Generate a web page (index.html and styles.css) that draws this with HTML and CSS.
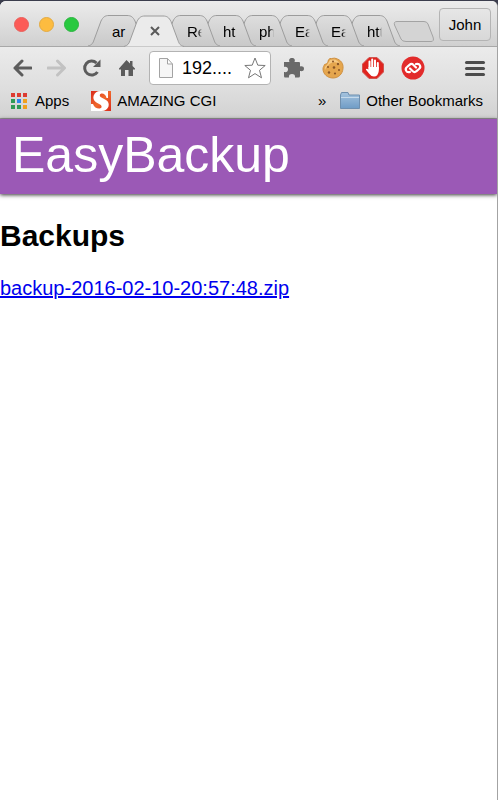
FILE: index.html
```html
<!DOCTYPE html>
<html lang="en">
<head>
    <meta charset="UTF-8">
    <meta name="viewport" content="width=device-width, initial-scale=1.0">
    <title>EasyBackup</title>
    <link rel="stylesheet" href="styles.css">
</head>
<body>
    <!-- tab outline shared by every tab -->
    <svg width="0" height="0" class="defs">
        <defs>
            <linearGradient id="tab-fill" x1="0" y1="0" x2="0" y2="1">
                <stop offset="0" stop-color="#dedede"/>
                <stop offset="1" stop-color="#c9c9c9"/>
            </linearGradient>
            <linearGradient id="folder-fill" x1="0" y1="0" x2="0" y2="1">
                <stop offset="0" stop-color="#a5c3de"/>
                <stop offset="1" stop-color="#6f9cc6"/>
            </linearGradient>
            <linearGradient id="s-fill" x1="0" y1="0" x2="1" y2="1">
                <stop offset="0" stop-color="#d92a1c"/>
                <stop offset=".5" stop-color="#f0682c"/>
                <stop offset="1" stop-color="#d92a1c"/>
            </linearGradient>
            <symbol id="tab-shape" viewBox="0 0 60 31">
                <path d="M0 31C4 30 5 28 6 25L13 6C15 2 17 .5 21 .5H39C43 .5 45 2 47 6L54 25C55 28 56 30 60 31"/>
            </symbol>
        </defs>
    </svg>

    <div class="window">
        <div class="tab-strip">
            <div class="lights">
                <button class="light red" aria-label="Close"></button>
                <button class="light yellow" aria-label="Minimize"></button>
                <button class="light green" aria-label="Zoom"></button>
            </div>
            <div class="tabs">
                <button class="tab first"><svg><use href="#tab-shape"/></svg><span>ar</span></button>
                <button class="tab active" aria-label="Close tab">
                    <svg><use href="#tab-shape"/></svg>
                    <svg class="close" viewBox="0 0 10 10"><path d="M1 1l8 8M9 1l-8 8"/></svg>
                </button>
                <button class="tab t3"><svg><use href="#tab-shape"/></svg><span>Re</span></button>
                <button class="tab t4"><svg><use href="#tab-shape"/></svg><span>ht</span></button>
                <button class="tab t5"><svg><use href="#tab-shape"/></svg><span>ph</span></button>
                <button class="tab t6"><svg><use href="#tab-shape"/></svg><span>Ea</span></button>
                <button class="tab t7"><svg><use href="#tab-shape"/></svg><span>Ea</span></button>
                <button class="tab t8"><svg><use href="#tab-shape"/></svg><span>htt</span></button>
            </div>
            <button class="new-tab" aria-label="New tab">
                <svg viewBox="0 0 42 21"><path d="M4 .5H31Q34 .5 35 3L40 16Q41.500 20.500 38 20.500H13Q9 20.500 8 18L1.500 4Q.5 .5 4 .5Z"/></svg>
            </button>
            <button class="user">John</button>
        </div>

        <div class="toolbar">
            <div class="nav">
                <button aria-label="Back"><svg class="nav-icon" viewBox="0 0 20 20"><path d="M19 10H3M10 3L3 10L10 17"/></svg></button>
                <button aria-label="Forward" class="disabled"><svg class="nav-icon" viewBox="0 0 20 20"><path d="M1 10H17M10.500 3L17.500 10L10.500 17"/></svg></button>
                <button aria-label="Reload"><svg class="nav-icon reload" viewBox="0 0 20 20"><path d="M15.500 14A7 7 0 1 1 14.500 5"/><path class="solid" d="M18.500 1.500V9H11Z"/></svg></button>
                <button aria-label="Home"><svg viewBox="0 0 20 20"><path fill="#5c5c5c" d="M2 10.500L9.500 2L13 5.500V3H15.500V8L18 10.500V11.500H16V18H11.500V12H8V18H4V11.500H2Z"/></svg></button>
            </div>
            <div class="omnibox">
                <svg class="page-icon" viewBox="0 0 14 20"><path d="M.5 .5H8.500L13.500 6V19.500H.5ZM8.500 .5V6H13.500"/></svg>
                <input type="text" value="192...." aria-label="Address">
                <button aria-label="Bookmark this page"><svg class="star" viewBox="0 0 22 22"><path d="M11 1L13.800 8.200L21.200 8.500L15.500 13.300L17.500 20.800L11 16.600L4.500 20.800L6.500 13.300L.8 8.500L8.200 8.200Z"/></svg></button>
            </div>
            <div class="extensions">
                <button aria-label="Extension">
                    <svg viewBox="0 0 24 24"><path fill="#696969" d="M3 6H8.500C7.500 4 8.500 2 11 2S14.500 4 13.500 6H18Q19 6 19 7V10.500C21 10 23 10.500 23 12.700S21 15.500 19 15V20Q19 21.500 17.500 21.500H14C14.500 19 13 18 11 18S7.500 19 8 21.500H4Q3 21.500 3 20V16C5.500 16.500 7 15.500 7 13.500S5.500 10.500 3 11Z"/></svg>
                </button>
                <button aria-label="Cookies">
                    <svg viewBox="0 0 24 24">
                        <path fill="#e5a64e" stroke="#cf9040" d="M9 2.500C11 3 13 1.500 15 2.500C20 4 22.500 7.500 22 12.500C21.500 18 17.500 22 12 22S2 18 2 13C2 11 3 10 3.500 8.500C5 8 7 7.500 7 5.500Q7 3.500 9 2.500Z"/>
                        <path fill="#f6c983" d="M9 4Q16 2 19 8Q15 5 10 7Q6 9 4 14Q3 11 6 9Z"/>
                        <g fill="#8a5526"><circle cx="12" cy="5.500" r="1"/><circle cx="17" cy="8" r="1.200"/><circle cx="7" cy="11" r="1"/><circle cx="13" cy="11.500" r="1.300"/><circle cx="18" cy="14" r="1"/><circle cx="8" cy="16.500" r="1.200"/><circle cx="14" cy="17.500" r="1.100"/></g>
                    </svg>
                </button>
                <button aria-label="Ad blocker">
                    <svg viewBox="0 0 24 24">
                        <path fill="#e0241f" stroke="#d05550" d="M8 1.500H16L22.500 8V16L16 22.500H8L1.500 16V8Z"/>
                        <path fill="none" stroke="#fff" stroke-width="2" stroke-linecap="round" d="M8.500 12V5.500M11.200 12V3.500M14 12V4.500M16.800 13V7"/>
                        <path fill="#fff" d="M7.500 11H17.800V15Q17 20.500 13 20.500Q10 20.500 8 17.500L4.800 13.500Q5.500 12 7.500 13.500Z"/>
                    </svg>
                </button>
                <button aria-label="Authy">
                    <svg viewBox="0 0 24 24">
                        <circle cx="12" cy="12" r="11.500" fill="#e22b2b"/>
                        <g fill="none" stroke="#fff" stroke-width="2.200" stroke-linecap="round">
                            <path d="M9 16C5 17 3.500 13 6 11L8.500 8.800C10 7.500 11.500 8 12.500 9L15 11.500"/>
                            <path d="M15 8C19 7 20.500 11 18 13L15.500 15.200C14 16.500 12.500 16 11.500 15L9 12.500"/>
                        </g>
                    </svg>
                </button>
            </div>
            <button class="menu" aria-label="Menu"><i></i><i></i><i></i></button>
        </div>

        <div class="bookmarks">
            <a href="#" class="apps">
                <svg viewBox="0 0 16 16">
                    <path fill="#dc3c32" d="M0 0h4v4H0zM6 0h4v4H6zM12 0h4v4h-4z"/>
                    <path fill="#2f9a55" d="M0 6h4v4H0zM0 12h4v4H0zM6 12h4v4H6z"/>
                    <path fill="#2b86ec" d="M6 6h4v4H6z"/>
                    <path fill="#f0a01e" d="M12 6h4v4h-4zM12 12h4v4h-4z"/>
                </svg>
                Apps
            </a>
            <a href="#" class="site">
                <svg viewBox="0 0 20 20">
                    <path fill="url(#s-fill)" d="M0 0H20V20H0Z"/>
                    <path fill="#fff" d="M17 0V7H15.500C15 4 13 2.500 11 2.500C8.500 2.500 8 5 10 6.200L15 9C20 12 18 20 10.500 20H0V13H2C3 16 5.500 17.500 8 17.500C11 17.500 11.500 15 9 13.500L5 11.200C0 8 2.500 0 9.500 0Z"/>
                </svg>
                AMAZING CGI
            </a>
            <button class="more" aria-label="More bookmarks">»</button>
            <a href="#" class="other">
                <svg viewBox="0 0 20 18"><path fill="url(#folder-fill)" stroke="#6f8fae" d="M.5 3V16.500H19.500V3H9L8 .5H1.500Z"/><path stroke="#c6daeb" d="M1 5.500H19"/></svg>
                Other Bookmarks
            </a>
        </div>

        <header class="page-header">EasyBackup</header>
        <main>
            <h2>Backups</h2>
            <a href="#">backup-2016-02-10-20:57:48.zip</a>
        </main>
    </div>
</body>
</html>
```
FILE: styles.css
```css
* {
    box-sizing: border-box;
}

body {
    margin: 0;
    padding-top: 1px;
    background: #3b3d4d;
    font-family: "Liberation Sans", Arial, Helvetica, sans-serif;
    font-size: 15px;
    color: #000;
}

button {
    padding: 0;
    border: none;
    background: none;
    font: inherit;
    color: inherit;
}

svg {
    display: block;
}

.defs {
    position: absolute;
}

.window {
    min-height: calc(100vh - 1px);
    background: #fff;
    border-right: 1px solid #a3a3a3;
    border-radius: 6px 6px 0 0;
    overflow: hidden;
}

/* Tab strip */
.tab-strip {
    display: flex;
    height: 46px;
    padding: 0 6px 0 14px;
    background: linear-gradient(#ececec, #d0d0d0);
    border-bottom: 1px solid #a8a8a8;
}

.lights {
    display: flex;
    gap: 10px;
    padding-top: 16px;
}

.light {
    width: 15px;
    height: 15px;
    border-radius: 50%;
}

.red {
    background: #fc5b57;
    border: 1px solid #e9605b;
}

.yellow {
    background: #fdbc40;
    border: 1px solid #e3aa42;
}

.green {
    background: #28c940;
    border: 1px solid #2bb540;
}

.tabs {
    display: flex;
    padding: 14px 0 0 11px;
}

.tab {
    display: grid;
    flex: none;
    width: 60px;
    height: 32px;
    margin-right: -24px;
    text-align: left;
    align-items: start;
    z-index: 1;
}

.tab > * {
    grid-area: 1 / 1;
}

.tab > svg {
    width: 60px;
    height: 31px;
    fill: url(#tab-fill);
    stroke: #9c9c9c;
}

.tab span {
    width: 17px;
    margin: 8px 0 0 27px;
    line-height: 17px;
    white-space: nowrap;
    overflow: hidden;
    -webkit-mask-image: linear-gradient(to right, #000 11px, transparent 15px);
    mask-image: linear-gradient(to right, #000 11px, transparent 15px);
}

.tab.first {
    margin-left: -2px;
}

.tab.first span {
    margin-left: 24px;
    -webkit-mask-image: none;
    mask-image: none;
}

.tab.active {
    z-index: 9;
}

.tab.active > svg {
    height: 32px;
    fill: #ebebeb;
}

.tab.active > .close {
    width: 10px;
    height: 10px;
    margin: 11px 0 0 26px;
    fill: none;
    stroke: #5a5a5a;
    stroke-width: 2;
}

.t3 { z-index: 8; }
.t4 { z-index: 7; }
.t5 { z-index: 6; }
.t6 { z-index: 5; }
.t7 { z-index: 4; }
.t8 { z-index: 3; }

.new-tab {
    width: 42px;
    margin-left: 17px;
    padding-top: 20px;
    align-self: flex-start;
}

.new-tab svg {
    width: 42px;
    height: 21px;
    fill: #d4d4d4;
    stroke: #a3a3a3;
}

.user {
    width: 52px;
    height: 33px;
    margin: 7px 0 0 auto;
    border: 1px solid #b4b4b4;
    border-radius: 4px;
    background: linear-gradient(#e6e6e6, #d8d8d8);
}

/* Toolbar */
.toolbar {
    display: flex;
    align-items: center;
    height: 42px;
    padding: 0 12px;
    background: linear-gradient(#ebebeb, #dedede);
}

.nav {
    display: flex;
    gap: 15px;
}

.nav svg {
    width: 20px;
    height: 20px;
}

.nav-icon {
    fill: none;
    stroke: #5c5c5c;
    stroke-width: 3;
    stroke-linecap: round;
    stroke-linejoin: round;
}

.nav-icon.reload {
    stroke-linecap: butt;
}

.nav-icon .solid {
    fill: #5c5c5c;
    stroke: none;
}

.disabled .nav-icon {
    stroke: #c2c2c2;
}

.omnibox {
    display: flex;
    align-items: center;
    flex: 1;
    min-width: 0;
    height: 34px;
    margin-left: 12px;
    padding: 0 4px 0 9px;
    background: #fff;
    border: 1px solid #b3b3b3;
    border-radius: 4px;
}

.page-icon {
    flex: none;
    width: 14px;
    height: 20px;
    fill: #f6f6f6;
    stroke: #a3a3a3;
}

.omnibox input {
    flex: 1;
    min-width: 0;
    margin-left: 9px;
    padding: 0;
    border: none;
    background: none;
    font: inherit;
    font-size: 18px;
    outline: none;
}

.star {
    width: 22px;
    height: 22px;
    fill: #fff;
    stroke: #777;
}

.extensions {
    display: flex;
    gap: 16px;
    margin-left: 10px;
}

.extensions svg {
    width: 24px;
    height: 24px;
}

.menu {
    display: grid;
    gap: 3px;
    width: 20px;
    margin-left: 40px;
}

.menu i {
    height: 3px;
    background: #4c4c4c;
    border-radius: 2px;
}

/* Bookmarks bar */
.bookmarks {
    display: flex;
    align-items: center;
    height: 30px;
    padding: 0 14px 6px 11px;
    background: linear-gradient(#dedede, #d2d2d2);
    border-bottom: 1px solid #9c9c9c;
}

.bookmarks a {
    display: flex;
    align-items: center;
    color: #000;
    text-decoration: none;
    white-space: nowrap;
}

.apps {
    gap: 8px;
}

.apps svg {
    width: 16px;
    height: 16px;
}

.site {
    gap: 6px;
    margin-left: 22px;
}

.site svg {
    width: 20px;
    height: 20px;
}

.more {
    margin-left: auto;
    font-size: 15px;
}

.other {
    gap: 6px;
    margin-left: 14px;
}

.other svg {
    width: 20px;
    height: 18px;
}

/* Page */
.page-header {
    height: 75px;
    padding-left: 12px;
    background: #9b59b6;
    box-shadow: 0 1px 4px rgba(0, 0, 0, 0.8);
    color: #fff;
    font-size: 50px;
    line-height: 73px;
}

main {
    padding-top: 24px;
    font-size: 20px;
}

h2 {
    margin: 0 0 24px;
    font-size: 30px;
    line-height: 35px;
}

main a {
    color: #0000ee;
}
```
